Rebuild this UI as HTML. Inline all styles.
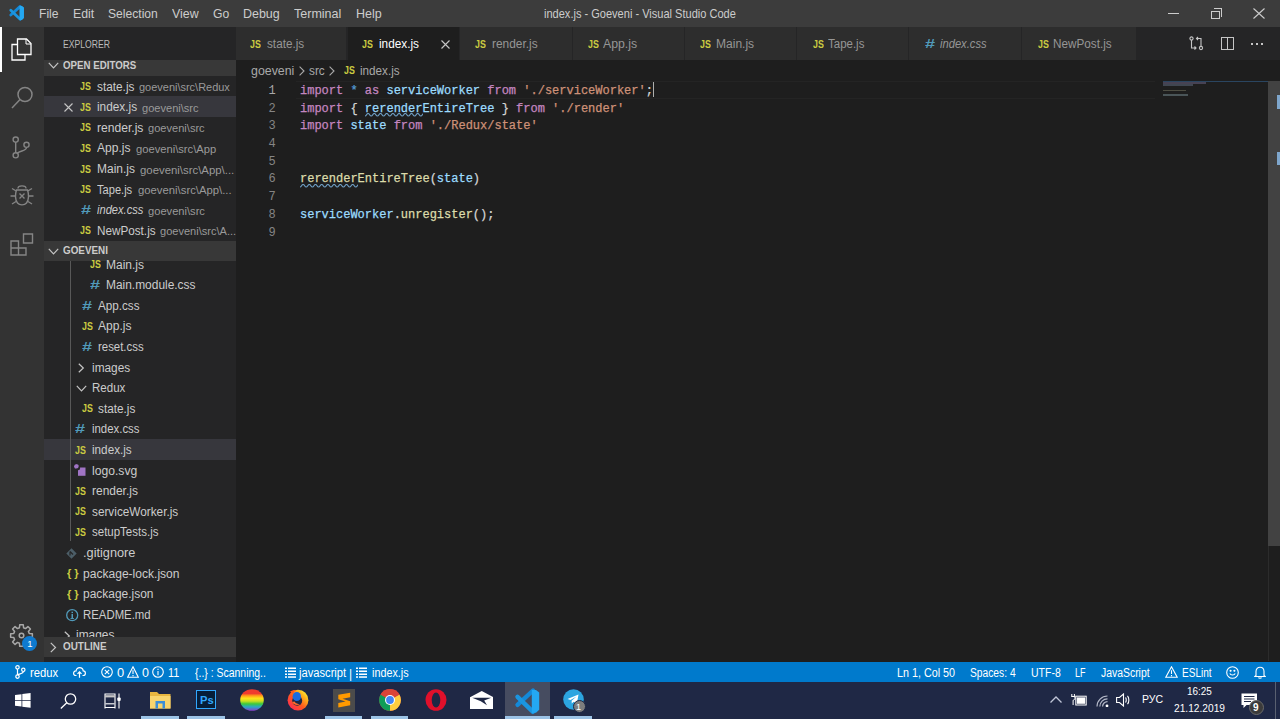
<!DOCTYPE html><html><head><meta charset="utf-8"><style>*{margin:0;padding:0;box-sizing:border-box}
html,body{width:1280px;height:719px;overflow:hidden;background:#1e1e1e;font-family:"Liberation Sans",sans-serif}
.a{position:absolute;white-space:nowrap}
.t{transform-origin:0 0;display:block}
</style></head><body>
<div class="a" style="left:0px;top:0px;width:1280px;height:27px;background:#3c3c3c;"></div>
<div class="a" style="left:0px;top:27px;width:44px;height:634.5px;background:#333333;"></div>
<div class="a" style="left:44px;top:27px;width:192px;height:634.5px;background:#252526;"></div>
<div class="a" style="left:236px;top:27px;width:1044px;height:33px;background:#252526;"></div>
<div class="a" style="left:0px;top:661.8px;width:1280px;height:20.2px;background:#007acc;"></div>
<div class="a" style="left:0px;top:682px;width:1280px;height:37px;background:#1f2845;"></div>
<svg class="a" style="left:4.7px;top:3px" width="20.7" height="19.5" viewBox="0 0 34 32"><path d="M25 5.5 L9.5 19.8" stroke="#1489d8" stroke-width="4.6" stroke-linecap="round"/><path d="M9.5 11.8 L25 26.8" stroke="#1b95e0" stroke-width="4.6" stroke-linecap="round"/><path d="M23.8 5 L28 4.9 L31.2 7.5 V24.8 L28 27.8 L23.8 28 Z" fill="#24a8f2"/></svg>
<div class="a" style="left:1168px;top:13px;width:11px;height:1px;background:#cccccc;"></div>
<div class="a" style="left:1211px;top:10.5px;width:8.5px;height:8.5px;border:1px solid #ccc"></div>
<div class="a" style="left:1213.5px;top:8px;width:8.5px;height:8.5px;border-top:1px solid #ccc;border-right:1px solid #ccc"></div>
<svg class="a" style="left:1253px;top:8px" width="12" height="11" viewBox="0 0 12 11"><path d="M0.5 0.5 L11.5 10.5 M11.5 0.5 L0.5 10.5" stroke="#ccc" stroke-width="1.1"/></svg>
<div class="a" style="left:0px;top:27px;width:2px;height:44.6px;background:#ffffff;"></div>
<svg class="a" style="left:10px;top:37px" width="24" height="25" viewBox="0 0 24 25" fill="none" stroke="#fff" stroke-width="1.3">
<path d="M7.5 7.5 H2 V23 H15 V17.5"/><path d="M7.5 2 H16.5 L21 6.5 V17.5 H7.5 Z"/><path d="M16 2 V7 H21" stroke-width="1"/></svg>
<svg class="a" style="left:9px;top:82px" width="26" height="28" viewBox="0 0 26 28" fill="none" stroke="#858585" stroke-width="1.5">
<circle cx="16" cy="12.5" r="7"/><path d="M11 17.5 L3 26"/></svg>
<svg class="a" style="left:10px;top:133px" width="24" height="26" viewBox="0 0 24 26" fill="none" stroke="#858585" stroke-width="1.4">
<circle cx="5.7" cy="6.6" r="2.6"/><circle cx="16.5" cy="11.8" r="2.6"/><circle cx="5.7" cy="22.3" r="2.6"/>
<path d="M5.7 9.2 V19.7 M16.5 14.4 C16.5 18 10 17.5 7.2 20.3"/></svg>
<svg class="a" style="left:8.5px;top:181px" width="26" height="28" viewBox="0 0 26 28" fill="none" stroke="#858585" stroke-width="1.4">
<path d="M9 7.5 C9 4 17 4 17 7.5"/><path d="M7.5 9 C6 13 6 19 8.5 22 C10.5 24.5 15.5 24.5 17.5 22 C20 19 20 13 18.5 9 Z"/>
<path d="M10.5 12.5 L15.5 17.5 M15.5 12.5 L10.5 17.5"/>
<path d="M1.5 15 H6 M20 15 H24.5 M3 7.5 L7.2 10 M23 7.5 L18.8 10 M3 23 L7 20.5 M23 23 L19 20.5"/></svg>
<svg class="a" style="left:9px;top:231px" width="26" height="28" viewBox="0 0 26 28" fill="none" stroke="#858585" stroke-width="1.4">
<path d="M2 10 H9.5 V24 H2 Z M2 17 H17 V24 H9.5 M14.5 3 H23.5 V12 H14.5 Z"/></svg>
<svg class="a" style="left:9px;top:623px" width="25" height="25" viewBox="0 0 25 25" fill="none" stroke="#a8a8a8" stroke-width="1.5" stroke-linejoin="round"><path d="M20.23 10.44 L23.36 10.75 L23.36 14.25 L20.23 14.56 L19.42 16.51 L21.42 18.94 L18.94 21.42 L16.51 19.42 L14.56 20.23 L14.25 23.36 L10.75 23.36 L10.44 20.23 L8.49 19.42 L6.06 21.42 L3.58 18.94 L5.58 16.51 L4.77 14.56 L1.64 14.25 L1.64 10.75 L4.77 10.44 L5.58 8.49 L3.58 6.06 L6.06 3.58 L8.49 5.58 L10.44 4.77 L10.75 1.64 L14.25 1.64 L14.56 4.77 L16.51 5.58 L18.94 3.58 L21.42 6.06 L19.42 8.49 Z"/><circle cx="12.5" cy="12.5" r="2.3"/></svg>
<div class="a" style="left:22px;top:635.5px;width:15px;height:15px;border-radius:8px;background:#0e7ad0"></div>
<div class="a" style="left:44px;top:59.7px;width:192px;height:16px;background:#383838;"></div>
<svg class="a" style="left:47.5px;top:62px" width="11" height="7" viewBox="0 0 11 7"><path d="M0.8 0.8 L5.5 5.8 L10.2 0.8" fill="none" stroke="#c5c5c5" stroke-width="1.2"/></svg>
<div class="a" style="left:44px;top:96.4px;width:192px;height:20.4px;background:#37373d;"></div>
<svg class="a" style="left:64px;top:103px" width="9" height="9" viewBox="0 0 9 9"><path d="M0.5 0.5 L8.5 8.5 M8.5 0.5 L0.5 8.5" stroke="#c5c5c5" stroke-width="1.1"/></svg>
<div class="a" style="left:44px;top:240.5px;width:192px;height:20.2px;background:#383838;"></div>
<svg class="a" style="left:47.5px;top:247.5px" width="11" height="7" viewBox="0 0 11 7"><path d="M0.8 0.8 L5.5 5.8 L10.2 0.8" fill="none" stroke="#c5c5c5" stroke-width="1.2"/></svg>
<div class="a" style="left:44px;top:438.90000000000003px;width:192px;height:21px;background:#37373d;"></div>
<div class="a" style="left:70.2px;top:260.6px;width:1px;height:280px;background:#585858;"></div>
<svg class="a" style="left:78.25px;top:362.7px" width="7" height="10" viewBox="0 0 7 10"><path d="M0.8 0.8 L5.3 5 L0.8 9.2" fill="none" stroke="#c5c5c5" stroke-width="1.2"/></svg>
<svg class="a" style="left:75.5px;top:384.8px" width="11" height="7" viewBox="0 0 11 7"><path d="M0.8 0.8 L5.5 5.8 L10.2 0.8" fill="none" stroke="#c5c5c5" stroke-width="1.2"/></svg>
<svg class="a" style="left:74.1px;top:464.2px" width="12" height="12" viewBox="0 0 12 12"><circle cx="2.5" cy="2.5" r="2.3" fill="#a074c4"/><path d="M4 3.5 H11.5 V11.8 H4 Z" fill="#a074c4"/><circle cx="4" cy="4" r="2.2" fill="#252526"/><circle cx="2.5" cy="2.5" r="2.1" fill="#a074c4"/></svg>
<svg class="a" style="left:66.25px;top:547.6px" width="11" height="11" viewBox="0 0 11 11"><path d="M5.5 0.3 L10.7 5.5 L5.5 10.7 L0.3 5.5 Z" fill="#4c5e68"/><path d="M4 3.5 L7 6.5 M4 3.5 V7.5" stroke="#252526" stroke-width="1.2"/></svg>
<svg class="a" style="left:65.6px;top:608.9000000000001px" width="13" height="13" viewBox="0 0 13 13"><circle cx="6.2" cy="6.2" r="5.5" fill="none" stroke="#519aba" stroke-width="1.3"/><rect x="5.5" y="5" width="1.5" height="4.6" fill="#519aba"/><rect x="5.5" y="2.7" width="1.5" height="1.4" fill="#519aba"/><rect x="4.5" y="9" width="3.5" height="0.9" fill="#519aba"/></svg>
<svg class="a" style="left:63.5px;top:630.5px" width="7" height="10" viewBox="0 0 7 10"><path d="M0.8 0.8 L5.3 5 L0.8 9.2" fill="none" stroke="#c5c5c5" stroke-width="1.2"/></svg>
<div class="a" style="left:235.6px;top:27px;width:110.9px;height:32.6px;background:#2d2d2d;"></div>
<div class="a" style="left:347.5px;top:27px;width:111.5px;height:32.6px;background:#1e1e1e;"></div>
<div class="a" style="left:460px;top:27px;width:111.5px;height:32.6px;background:#2d2d2d;"></div>
<div class="a" style="left:572.5px;top:27px;width:111.5px;height:32.6px;background:#2d2d2d;"></div>
<div class="a" style="left:685px;top:27px;width:111px;height:32.6px;background:#2d2d2d;"></div>
<div class="a" style="left:797px;top:27px;width:111px;height:32.6px;background:#2d2d2d;"></div>
<div class="a" style="left:909px;top:27px;width:112px;height:32.6px;background:#2d2d2d;"></div>
<div class="a" style="left:1022px;top:27px;width:114.40000000000009px;height:32.6px;background:#2d2d2d;"></div>
<svg class="a" style="left:441px;top:40px" width="9" height="9" viewBox="0 0 9 9"><path d="M0.5 0.5 L8.5 8.5 M8.5 0.5 L0.5 8.5" stroke="#c5c5c5" stroke-width="1.1"/></svg>
<svg class="a" style="left:1189px;top:36px" width="15" height="15" viewBox="0 0 15 15" fill="none" stroke="#c5c5c5" stroke-width="1.1">
<circle cx="2.5" cy="2.5" r="1.6"/><circle cx="12" cy="12" r="1.6"/><path d="M2.5 4.1 V12 H7 M5.5 10.5 L7 12 L5.5 13.5 M12 10.4 V2.5 H7.5 M9 1 L7.5 2.5 L9 4"/></svg>
<div class="a" style="left:1221px;top:37px;width:12.5px;height:12.5px;border:1.2px solid #c5c5c5"></div>
<div class="a" style="left:1226.6px;top:37px;width:1.2px;height:12.5px;background:#c5c5c5;"></div>
<div class="a" style="left:1251px;top:43.3px;width:2px;height:2px;background:#c5c5c5"></div>
<div class="a" style="left:1256px;top:43.3px;width:2px;height:2px;background:#c5c5c5"></div>
<div class="a" style="left:1261px;top:43.3px;width:2px;height:2px;background:#c5c5c5"></div>
<svg class="a" style="left:298.5px;top:65.5px" width="6" height="10" viewBox="0 0 6 10"><path d="M0.6 0.6 L5 5 L0.6 9.4" fill="none" stroke="#a9a9a9" stroke-width="1.1"/></svg>
<svg class="a" style="left:328.6px;top:65.5px" width="6" height="10" viewBox="0 0 6 10"><path d="M0.6 0.6 L5 5 L0.6 9.4" fill="none" stroke="#a9a9a9" stroke-width="1.1"/></svg>
<div class="a" style="left:296px;top:80.6px;width:859px;height:1px;background:#242424;"></div>
<div class="a" style="left:296px;top:97.6px;width:859px;height:1px;background:#242424;"></div>
<div class="a" style="left:652.5px;top:82px;width:1.3px;height:15px;background:#aeafad;"></div>
<svg class="a" style="left:364.8px;top:113.3px" width="58" height="4" viewBox="0 0 58 4"><path d="M0 3 C1.50 3 1.60 0.5 3.10 0.5 C4.60 0.5 4.70 3 6.20 3 C7.70 3 7.80 0.5 9.30 0.5 C10.80 0.5 10.90 3 12.40 3 C13.90 3 14.00 0.5 15.50 0.5 C17.00 0.5 17.10 3 18.60 3 C20.10 3 20.20 0.5 21.70 0.5 C23.20 0.5 23.30 3 24.80 3 C26.30 3 26.40 0.5 27.90 0.5 C29.40 0.5 29.50 3 31.00 3 C32.50 3 32.60 0.5 34.10 0.5 C35.60 0.5 35.70 3 37.20 3 C38.70 3 38.80 0.5 40.30 0.5 C41.80 0.5 41.90 3 43.40 3 C44.90 3 45.00 0.5 46.50 0.5 C48.00 0.5 48.10 3 49.60 3 C51.10 3 51.20 0.5 52.70 0.5 C54.20 0.5 54.30 3 55.80 3 C57.30 3 57.40 0.5 58.90 0.5 C60.40 0.5 60.50 3 62.00 3" fill="none" stroke="#6f9fc4" stroke-width="1.2"/></svg>
<svg class="a" style="left:300px;top:183.5px" width="58" height="4" viewBox="0 0 58 4"><path d="M0 3 C1.50 3 1.60 0.5 3.10 0.5 C4.60 0.5 4.70 3 6.20 3 C7.70 3 7.80 0.5 9.30 0.5 C10.80 0.5 10.90 3 12.40 3 C13.90 3 14.00 0.5 15.50 0.5 C17.00 0.5 17.10 3 18.60 3 C20.10 3 20.20 0.5 21.70 0.5 C23.20 0.5 23.30 3 24.80 3 C26.30 3 26.40 0.5 27.90 0.5 C29.40 0.5 29.50 3 31.00 3 C32.50 3 32.60 0.5 34.10 0.5 C35.60 0.5 35.70 3 37.20 3 C38.70 3 38.80 0.5 40.30 0.5 C41.80 0.5 41.90 3 43.40 3 C44.90 3 45.00 0.5 46.50 0.5 C48.00 0.5 48.10 3 49.60 3 C51.10 3 51.20 0.5 52.70 0.5 C54.20 0.5 54.30 3 55.80 3 C57.30 3 57.40 0.5 58.90 0.5 C60.40 0.5 60.50 3 62.00 3" fill="none" stroke="#6f9fc4" stroke-width="1.2"/></svg>
<div class="a" style="left:1163px;top:81px;width:105px;height:1px;background:#2a4560;"></div>
<div class="a" style="left:1163px;top:81.5px;width:43px;height:2px;background:#6a6080;opacity:.55"></div>
<div class="a" style="left:1163px;top:84px;width:30px;height:2px;background:#6a7890;opacity:.45"></div>
<div class="a" style="left:1163px;top:89.8px;width:23px;height:1.5px;background:#8a8a70;opacity:.45"></div>
<div class="a" style="left:1163px;top:94px;width:25px;height:1.5px;background:#8098a0;opacity:.45"></div>
<div class="a" style="left:1268px;top:80.6px;width:12px;height:465.6px;background:#424242;"></div>
<div class="a" style="left:1268px;top:546.2px;width:1px;height:115.3px;background:#2c2c2c;"></div>
<div class="a" style="left:1276.8px;top:94.5px;width:3.2px;height:14px;background:#7ea6cc;"></div>
<div class="a" style="left:1276.8px;top:152.2px;width:3.2px;height:13.2px;background:#7ea6cc;"></div>
<svg class="a" style="left:14.5px;top:665px" width="11" height="14" viewBox="0 0 11 14" fill="none" stroke="#fff" stroke-width="1.2">
<circle cx="2.5" cy="2.3" r="1.7"/><circle cx="8.3" cy="4.8" r="1.7"/><circle cx="2.5" cy="11.6" r="1.7"/><path d="M2.5 4 V9.9 M8.3 6.5 C8.3 9 3.8 8.5 2.8 9.9"/></svg>
<svg class="a" style="left:72.5px;top:667px" width="13" height="11" viewBox="0 0 13 11" fill="none" stroke="#fff" stroke-width="1.2">
<path d="M3.5 8.5 H2.8 C1.3 8.5 0.6 7.5 0.6 6.2 C0.6 4.8 1.8 3.8 3 4 C3.4 2 5 0.7 6.7 0.7 C8.6 0.7 10 2.1 10.2 3.9 C11.5 3.9 12.4 5 12.4 6.2 C12.4 7.5 11.5 8.5 10.2 8.5 H9.5"/><path d="M6.5 10.8 V4.8 M4.5 6.8 L6.5 4.8 L8.5 6.8"/></svg>
<svg class="a" style="left:100.5px;top:666px" width="12" height="12" viewBox="0 0 12 12" fill="none" stroke="#fff" stroke-width="1.1"><circle cx="6" cy="6" r="5.3"/><path d="M3.8 3.8 L8.2 8.2 M8.2 3.8 L3.8 8.2"/></svg>
<svg class="a" style="left:126.5px;top:665.5px" width="12" height="12" viewBox="0 0 12 12" fill="none" stroke="#fff" stroke-width="1.1"><path d="M6 0.8 L11.3 11.2 H0.7 Z M6 4.2 V8 M6 9 V10.2"/></svg>
<svg class="a" style="left:152px;top:666px" width="12" height="12" viewBox="0 0 12 12" fill="none" stroke="#fff" stroke-width="1.1"><circle cx="6" cy="6" r="5.3"/><path d="M6 5 V9.2 M6 2.8 V4"/></svg>
<svg class="a" style="left:285px;top:666.5px" width="11" height="11" viewBox="0 0 11 11" fill="#fff"><rect x="0" y="0.5" width="2" height="1.5"/><rect x="3" y="0.5" width="8" height="1.5"/><rect x="0" y="3.5" width="2" height="1.5"/><rect x="3" y="3.5" width="8" height="1.5"/><rect x="0" y="6.5" width="2" height="1.5"/><rect x="3" y="6.5" width="8" height="1.5"/><rect x="0" y="9.3" width="2" height="1.5"/><rect x="3" y="9.3" width="8" height="1.5"/></svg>
<svg class="a" style="left:356px;top:666.5px" width="11" height="11" viewBox="0 0 11 11" fill="#fff"><rect x="0" y="0.5" width="2" height="1.5"/><rect x="3" y="0.5" width="8" height="1.5"/><rect x="0" y="3.5" width="2" height="1.5"/><rect x="3" y="3.5" width="8" height="1.5"/><rect x="0" y="6.5" width="2" height="1.5"/><rect x="3" y="6.5" width="8" height="1.5"/><rect x="0" y="9.3" width="2" height="1.5"/><rect x="3" y="9.3" width="8" height="1.5"/></svg>
<svg class="a" style="left:1164.5px;top:665.5px" width="13" height="12" viewBox="0 0 13 12" fill="none" stroke="#fff" stroke-width="1.1"><path d="M6.5 0.8 L12.2 11.2 H0.8 Z M6.5 4.2 V8 M6.5 9 V10.2"/></svg>
<svg class="a" style="left:1225.5px;top:665.5px" width="13" height="13" viewBox="0 0 13 13" fill="none" stroke="#fff" stroke-width="1.1"><circle cx="6.5" cy="6.5" r="5.8"/><path d="M3.8 7.5 C4.8 9.5 8.2 9.5 9.2 7.5"/><circle cx="4.6" cy="4.8" r="0.5" fill="#fff"/><circle cx="8.4" cy="4.8" r="0.5" fill="#fff"/></svg>
<svg class="a" style="left:1254px;top:665.5px" width="12" height="13" viewBox="0 0 12 13" fill="none" stroke="#fff" stroke-width="1.1"><path d="M2 9.5 V5.5 C2 3 3.8 1.3 6 1.3 C8.2 1.3 10 3 10 5.5 V9.5 L11.2 10.5 H0.8 Z M4.5 11.5 C4.8 12.5 7.2 12.5 7.5 11.5"/></svg>
<svg class="a" style="left:14.5px;top:693px" width="16" height="15" viewBox="0 0 16 15" fill="#ffffff"><path d="M0 2.1 L6.5 1.2 V7 H0 Z M7.3 1.1 L15.6 0 V7 H7.3 Z M0 7.8 H6.5 V13.6 L0 12.8 Z M7.3 7.8 H15.6 V14.8 L7.3 13.7 Z"/></svg>
<svg class="a" style="left:59.5px;top:692.5px" width="17" height="16" viewBox="0 0 17 16" fill="none" stroke="#ffffff" stroke-width="1.3"><circle cx="10.5" cy="6" r="5.2"/><path d="M6.8 9.7 L0.8 15.5"/></svg>
<svg class="a" style="left:104px;top:692.5px" width="17" height="16" viewBox="0 0 17 16" fill="none" stroke="#ffffff" stroke-width="1.1"><path d="M1 0.5 V15.5 M11 0.5 V15.5 M1 1 H11 M1 14.5 H11"/><rect x="1" y="2.2" width="10" height="2.2" fill="#c8c8c8" stroke="none"/><path d="M1.5 10.8 H10.5"/><path d="M15 0.5 V15.5"/><rect x="13.3" y="4.5" width="3.4" height="3.6" rx="1" fill="#ffffff" stroke="none"/></svg>
<div class="a" style="left:140.6px;top:716.3px;width:38.70000000000002px;height:2.7px;background:#9cc3e6;"></div>
<div class="a" style="left:186.8px;top:716.3px;width:38.19999999999999px;height:2.7px;background:#9cc3e6;"></div>
<div class="a" style="left:324.7px;top:716.3px;width:37.69999999999999px;height:2.7px;background:#9cc3e6;"></div>
<div class="a" style="left:371px;top:716.3px;width:37px;height:2.7px;background:#9cc3e6;"></div>
<div class="a" style="left:505px;top:716.3px;width:44.5px;height:2.7px;background:#9cc3e6;"></div>
<div class="a" style="left:554.4px;top:716.3px;width:37.60000000000002px;height:2.7px;background:#9cc3e6;"></div>
<div class="a" style="left:505px;top:682px;width:44.5px;height:37px;background:#464c60;"></div>
<div class="a" style="left:505px;top:716.3px;width:44.5px;height:2.7px;background:#9cc3e6;"></div>
<svg class="a" style="left:150px;top:691px" width="21" height="18" viewBox="0 0 21 18"><path d="M0 1 H7 L9 3 H20.5 V17.5 H0 Z" fill="#e8b640"/><path d="M0 5 H20.5 V17.5 H0 Z" fill="#f9d56e"/><path d="M5.5 10 H15 V17.5 H12.5 V12.5 H8 V17.5 H5.5 Z" fill="#3d8fd8"/></svg>
<div class="a" style="left:196px;top:689.5px;width:20px;height:19px;background:#061e3a;border:1.5px solid #31a8ff"></div>
<svg class="a" style="left:240px;top:689px" width="24" height="22" viewBox="0 0 24 22"><defs><linearGradient id="rb" x1="0" y1="0" x2="0" y2="1"><stop offset="0" stop-color="#f03a2e"/><stop offset=".2" stop-color="#f03a2e"/><stop offset=".3" stop-color="#ff9a1a"/><stop offset=".42" stop-color="#ffe21a"/><stop offset=".55" stop-color="#c8e020"/><stop offset=".68" stop-color="#3cc83c"/><stop offset=".82" stop-color="#2aa8c8"/><stop offset="1" stop-color="#8a3cc8"/></linearGradient></defs><ellipse cx="12" cy="11" rx="11.8" ry="10.8" fill="url(#rb)"/></svg>
<svg class="a" style="left:287px;top:689px" width="22" height="22" viewBox="0 0 22 22"><defs><linearGradient id="ffg" x1="0.1" y1="0.9" x2="0.9" y2="0.1"><stop offset="0" stop-color="#ff2a55"/><stop offset=".45" stop-color="#ff5a1e"/><stop offset=".8" stop-color="#ffb81c"/><stop offset="1" stop-color="#fff13a"/></linearGradient></defs><circle cx="11" cy="11.2" r="10.4" fill="url(#ffg)"/><circle cx="10.2" cy="11.8" r="5" fill="#1f2845"/><ellipse cx="9.8" cy="7.5" rx="4.2" ry="4.6" fill="#1a6be0"/><path d="M5 13 C6.5 16 10.5 16.8 13 15 C11 15 8.5 14.5 7.5 12.5 Z" fill="#ff6a2a"/><path d="M3 2.5 C4.5 1.5 7 0.8 9 1 C7.5 2 6.5 3.5 6.2 5 Z" fill="#ff5a1e"/></svg>
<div class="a" style="left:332.5px;top:689px;width:22.2px;height:22.5px;background:#4b4b4b"></div>
<svg class="a" style="left:332.5px;top:689px" width="22.2" height="22.5" viewBox="0 0 22.2 22.5"><path d="M5.3 5.8 L17.2 3.8 V8.3 L9.5 9.8 L17.2 12.2 V16.3 L5.3 18.5 V14 L12.6 12.6 L5.3 10.3 Z" fill="#ff9a00"/></svg>
<svg class="a" style="left:378.8px;top:688.7px" width="22" height="22" viewBox="0 0 22 22"><circle cx="11" cy="11" r="10.8" fill="#db4437"/><path d="M11 11 L1.6 5.6 A10.8 10.8 0 0 0 11 21.8 Z" fill="#0f9d58"/><path d="M11 11 L11 21.8 A10.8 10.8 0 0 0 20.4 5.6 Z" fill="#ffcd40"/><path d="M11 11 L20.4 5.6 A10.8 10.8 0 0 0 1.6 5.6 Z" fill="#db4437"/><circle cx="11" cy="11" r="5" fill="#fff"/><circle cx="11" cy="11" r="3.9" fill="#4285f4"/></svg>
<svg class="a" style="left:424.5px;top:688.7px" width="22" height="22" viewBox="0 0 22 22"><ellipse cx="11" cy="11" rx="10.5" ry="10.8" fill="#e0102b"/><ellipse cx="11" cy="11" rx="4.3" ry="7.6" fill="#1f2845"/></svg>
<svg class="a" style="left:469.6px;top:690.5px" width="23.5" height="18.5" viewBox="0 0 23.5 18.5"><path d="M0 6.2 L11.75 0 L23.5 6.2 V18.3 H0 Z" fill="#ffffff"/><path d="M2.2 6.8 H21.3 L14.2 9.6 L17 14.3 L10.8 10.2 Z" fill="#1f2845"/></svg>
<svg class="a" style="left:508px;top:684.8px" width="34" height="32" viewBox="0 0 34 32"><path d="M25 5.5 L9.5 19.8" stroke="#1489d8" stroke-width="4.4" stroke-linecap="round"/><path d="M9.5 11.8 L25 26.8" stroke="#1b95e0" stroke-width="4.4" stroke-linecap="round"/><path d="M23.8 5 L28 4.9 L31.2 7.5 V24.8 L28 27.8 L23.8 28 Z" fill="#24a8f2"/></svg>
<svg class="a" style="left:562.6px;top:689px" width="21" height="21" viewBox="0 0 21 21"><circle cx="10.5" cy="10.5" r="10.3" fill="#2ca5e0"/><path d="M4.5 10 L15.5 5.5 L13.8 15 L10.5 12.8 L8.8 14.5 L8.6 11.8 L13.5 7.5 L7.5 11 Z" fill="#ffffff"/></svg>
<div class="a" style="left:572.5px;top:700px;width:13px;height:13px;border-radius:7px;background:#7d7d7d;border:1px solid #1f2845"></div>
<svg class="a" style="left:1050px;top:696px" width="12" height="7" viewBox="0 0 12 7" fill="none" stroke="#c0c6d8" stroke-width="1.3"><path d="M0.5 6.5 L6 1 L11.5 6.5"/></svg>
<svg class="a" style="left:1070.5px;top:694px" width="16" height="12" viewBox="0 0 16 12"><path d="M0.8 0 V2.5 M3.4 0 V2.5 M0.3 2.5 H3.9 V4.5 C3.9 5.8 2.1 6.2 2.1 6.2 V11" fill="none" stroke="#fff" stroke-width="1"/><rect x="4.8" y="2.2" width="10.4" height="8.8" fill="none" stroke="#fff" stroke-width="1"/><rect x="5.8" y="3.4" width="8.4" height="6.4" fill="#fff"/></svg>
<svg class="a" style="left:1095.5px;top:694px" width="13" height="13" viewBox="0 0 13 13" fill="none" stroke="#b4b9c8" stroke-width="1.2"><path d="M1 12.5 A10.5 10.5 0 0 1 11.5 2 M3.8 12.5 A7.7 7.7 0 0 1 11.5 4.8 M6.6 12.5 A4.9 4.9 0 0 1 11.5 7.6"/><circle cx="11" cy="11.8" r="1.4" fill="#fff" stroke="none"/></svg>
<svg class="a" style="left:1116px;top:692.5px" width="15" height="14" viewBox="0 0 15 14" fill="none" stroke="#fff" stroke-width="1.1"><path d="M0.6 4.5 H3.5 L7.5 1 V13 L3.5 9.5 H0.6 Z M9.5 4.5 C10.5 5.5 10.5 8.5 9.5 9.5 M11.5 2.8 C13.3 4.8 13.3 9.2 11.5 11.2" /></svg>
<svg class="a" style="left:1241px;top:692.5px" width="17" height="16" viewBox="0 0 17 16"><path d="M0.5 0.5 H16 V12 H5.5 L2.5 15 V12 H0.5 Z" fill="#ffffff"/><path d="M3 3.5 H13.5 M3 6 H13.5 M3 8.5 H10" stroke="#1f2845" stroke-width="1.1"/></svg>
<div class="a" style="left:1248.5px;top:699.5px;width:15.5px;height:15.5px;border-radius:8px;background:#3b3b3b;border:1px solid #6a6a6a"></div>
<div class="a" style="left:1275.4px;top:682px;width:1px;height:37px;background:#596070;"></div>
<span id="t0" class="a t" style="left:39.00px;top:7.67px;font-size:12.2px;line-height:12.2px;color:#cccccc;font-family:'Liberation Sans',sans-serif;transform:scaleX(0.9943)">File</span>
<span id="t1" class="a t" style="left:72.50px;top:7.67px;font-size:12.2px;line-height:12.2px;color:#cccccc;font-family:'Liberation Sans',sans-serif;transform:scaleX(1.0107)">Edit</span>
<span id="t2" class="a t" style="left:107.80px;top:7.67px;font-size:12.2px;line-height:12.2px;color:#cccccc;font-family:'Liberation Sans',sans-serif;transform:scaleX(0.9938)">Selection</span>
<span id="t3" class="a t" style="left:171.90px;top:7.67px;font-size:12.2px;line-height:12.2px;color:#cccccc;font-family:'Liberation Sans',sans-serif;transform:scaleX(1.0168)">View</span>
<span id="t4" class="a t" style="left:212.50px;top:7.67px;font-size:12.2px;line-height:12.2px;color:#cccccc;font-family:'Liberation Sans',sans-serif;transform:scaleX(0.9978)">Go</span>
<span id="t5" class="a t" style="left:243.00px;top:7.67px;font-size:12.2px;line-height:12.2px;color:#cccccc;font-family:'Liberation Sans',sans-serif;transform:scaleX(1.0230)">Debug</span>
<span id="t6" class="a t" style="left:294.00px;top:7.67px;font-size:12.2px;line-height:12.2px;color:#cccccc;font-family:'Liberation Sans',sans-serif;transform:scaleX(1.0280)">Terminal</span>
<span id="t7" class="a t" style="left:355.60px;top:7.67px;font-size:12.2px;line-height:12.2px;color:#cccccc;font-family:'Liberation Sans',sans-serif;transform:scaleX(1.0269)">Help</span>
<span id="t8" class="a t" style="left:544.40px;top:7.57px;font-size:12.2px;line-height:12.2px;color:#cccccc;font-family:'Liberation Sans',sans-serif;transform:scaleX(0.9057)">index.js - Goeveni - Visual Studio Code</span>
<span id="t9" class="a t" style="left:27.20px;top:638.96px;font-size:9.5px;line-height:9.5px;color:#ffffff;font-family:'Liberation Sans',sans-serif">1</span>
<span id="t10" class="a t" style="left:63.00px;top:38.69px;font-size:11px;line-height:11px;color:#bbbbbb;font-family:'Liberation Sans',sans-serif;transform:scaleX(0.7847)">EXPLORER</span>
<span id="t11" class="a t" style="left:63.10px;top:60.63px;font-size:10px;line-height:10px;color:#cccccc;font-family:'Liberation Sans',sans-serif;font-weight:bold;transform:scaleX(0.9707)">OPEN EDITORS</span>
<span id="t12" class="a t" style="left:80.20px;top:81.21px;font-size:10.5px;line-height:10.5px;color:#cbcb41;font-family:'Liberation Sans',sans-serif;font-weight:bold;transform:scaleX(0.8433)">JS</span>
<span id="t13" class="a t" style="left:96.50px;top:80.64px;font-size:12px;line-height:12px;color:#cccccc;font-family:'Liberation Sans',sans-serif;transform:scaleX(0.9840)">state.js</span>
<span id="t14" class="a t" style="left:138.80px;top:82.19px;font-size:11px;line-height:11px;color:#9a9a9a;font-family:'Liberation Sans',sans-serif;transform:scaleX(0.9972)">goeveni\src\Redux</span>
<span id="t15" class="a t" style="left:80.20px;top:101.81px;font-size:10.5px;line-height:10.5px;color:#cbcb41;font-family:'Liberation Sans',sans-serif;font-weight:bold;transform:scaleX(0.8433)">JS</span>
<span id="t16" class="a t" style="left:96.90px;top:101.24px;font-size:12px;line-height:12px;color:#cccccc;font-family:'Liberation Sans',sans-serif;transform:scaleX(0.9845)">index.js</span>
<span id="t17" class="a t" style="left:141.80px;top:102.79px;font-size:11px;line-height:11px;color:#9a9a9a;font-family:'Liberation Sans',sans-serif;transform:scaleX(1.0053)">goeveni\src</span>
<span id="t18" class="a t" style="left:80.20px;top:122.41px;font-size:10.5px;line-height:10.5px;color:#cbcb41;font-family:'Liberation Sans',sans-serif;font-weight:bold;transform:scaleX(0.8433)">JS</span>
<span id="t19" class="a t" style="left:96.50px;top:121.84px;font-size:12px;line-height:12px;color:#cccccc;font-family:'Liberation Sans',sans-serif;transform:scaleX(1.0086)">render.js</span>
<span id="t20" class="a t" style="left:148.20px;top:123.39px;font-size:11px;line-height:11px;color:#9a9a9a;font-family:'Liberation Sans',sans-serif;transform:scaleX(1.0071)">goeveni\src</span>
<span id="t21" class="a t" style="left:80.20px;top:143.01px;font-size:10.5px;line-height:10.5px;color:#cbcb41;font-family:'Liberation Sans',sans-serif;font-weight:bold;transform:scaleX(0.8433)">JS</span>
<span id="t22" class="a t" style="left:96.50px;top:142.44px;font-size:12px;line-height:12px;color:#cccccc;font-family:'Liberation Sans',sans-serif;transform:scaleX(1.0019)">App.js</span>
<span id="t23" class="a t" style="left:135.50px;top:143.99px;font-size:11px;line-height:11px;color:#9a9a9a;font-family:'Liberation Sans',sans-serif;transform:scaleX(1.0162)">goeveni\src\App</span>
<span id="t24" class="a t" style="left:80.20px;top:163.61px;font-size:10.5px;line-height:10.5px;color:#cbcb41;font-family:'Liberation Sans',sans-serif;font-weight:bold;transform:scaleX(0.8433)">JS</span>
<span id="t25" class="a t" style="left:96.80px;top:163.04px;font-size:12px;line-height:12px;color:#cccccc;font-family:'Liberation Sans',sans-serif;transform:scaleX(0.9974)">Main.js</span>
<span id="t26" class="a t" style="left:139.70px;top:164.59px;font-size:11px;line-height:11px;color:#9a9a9a;font-family:'Liberation Sans',sans-serif;transform:scaleX(1.0348)">goeveni\src\App\...</span>
<span id="t27" class="a t" style="left:80.20px;top:184.21px;font-size:10.5px;line-height:10.5px;color:#cbcb41;font-family:'Liberation Sans',sans-serif;font-weight:bold;transform:scaleX(0.8433)">JS</span>
<span id="t28" class="a t" style="left:97.20px;top:183.64px;font-size:12px;line-height:12px;color:#cccccc;font-family:'Liberation Sans',sans-serif;transform:scaleX(0.9247)">Tape.js</span>
<span id="t29" class="a t" style="left:137.75px;top:185.19px;font-size:11px;line-height:11px;color:#9a9a9a;font-family:'Liberation Sans',sans-serif;transform:scaleX(1.0276)">goeveni\src\App\...</span>
<span id="t30" class="a t" style="left:80.50px;top:204.24px;font-size:12px;line-height:12px;color:#519aba;font-family:'Liberation Sans',sans-serif;font-weight:bold;transform:scaleX(1.5082)">#</span>
<span id="t31" class="a t" style="left:96.50px;top:204.24px;font-size:12px;line-height:12px;color:#cccccc;font-family:'Liberation Sans',sans-serif;font-style:italic;transform:scaleX(0.9268)">index.css</span>
<span id="t32" class="a t" style="left:147.50px;top:205.79px;font-size:11px;line-height:11px;color:#9a9a9a;font-family:'Liberation Sans',sans-serif;transform:scaleX(1.0116)">goeveni\src</span>
<span id="t33" class="a t" style="left:80.20px;top:225.41px;font-size:10.5px;line-height:10.5px;color:#cbcb41;font-family:'Liberation Sans',sans-serif;font-weight:bold;transform:scaleX(0.8433)">JS</span>
<span id="t34" class="a t" style="left:96.80px;top:224.84px;font-size:12px;line-height:12px;color:#cccccc;font-family:'Liberation Sans',sans-serif;transform:scaleX(0.9762)">NewPost.js</span>
<span id="t35" class="a t" style="left:159.80px;top:226.39px;font-size:11px;line-height:11px;color:#9a9a9a;font-family:'Liberation Sans',sans-serif;transform:scaleX(1.0037)">goeveni\src\A...</span>
<span id="t36" class="a t" style="left:62.70px;top:245.84px;font-size:10px;line-height:10px;color:#cccccc;font-family:'Liberation Sans',sans-serif;font-weight:bold;transform:scaleX(0.9849)">GOEVENI</span>
<span id="t37" class="a t" style="left:90.10px;top:259.11px;font-size:10.5px;line-height:10.5px;color:#cbcb41;font-family:'Liberation Sans',sans-serif;font-weight:bold;transform:scaleX(0.8433)">JS</span>
<span id="t38" class="a t" style="left:106.30px;top:258.54px;font-size:12px;line-height:12px;color:#cccccc;font-family:'Liberation Sans',sans-serif;transform:scaleX(1.0001)">Main.js</span>
<span id="t39" class="a t" style="left:90.00px;top:279.14px;font-size:12px;line-height:12px;color:#519aba;font-family:'Liberation Sans',sans-serif;font-weight:bold;transform:scaleX(1.5082)">#</span>
<span id="t40" class="a t" style="left:106.30px;top:279.14px;font-size:12px;line-height:12px;color:#cccccc;font-family:'Liberation Sans',sans-serif;transform:scaleX(0.9941)">Main.module.css</span>
<span id="t41" class="a t" style="left:82.40px;top:299.74px;font-size:12px;line-height:12px;color:#519aba;font-family:'Liberation Sans',sans-serif;font-weight:bold;transform:scaleX(1.5082)">#</span>
<span id="t42" class="a t" style="left:98.40px;top:299.74px;font-size:12px;line-height:12px;color:#cccccc;font-family:'Liberation Sans',sans-serif;transform:scaleX(0.9722)">App.css</span>
<span id="t43" class="a t" style="left:82.10px;top:320.91px;font-size:10.5px;line-height:10.5px;color:#cbcb41;font-family:'Liberation Sans',sans-serif;font-weight:bold;transform:scaleX(0.8433)">JS</span>
<span id="t44" class="a t" style="left:98.40px;top:320.34px;font-size:12px;line-height:12px;color:#cccccc;font-family:'Liberation Sans',sans-serif;transform:scaleX(1.0019)">App.js</span>
<span id="t45" class="a t" style="left:82.40px;top:340.94px;font-size:12px;line-height:12px;color:#519aba;font-family:'Liberation Sans',sans-serif;font-weight:bold;transform:scaleX(1.5082)">#</span>
<span id="t46" class="a t" style="left:98.40px;top:340.94px;font-size:12px;line-height:12px;color:#cccccc;font-family:'Liberation Sans',sans-serif;transform:scaleX(0.9493)">reset.css</span>
<span id="t47" class="a t" style="left:91.50px;top:361.54px;font-size:12px;line-height:12px;color:#cccccc;font-family:'Liberation Sans',sans-serif;transform:scaleX(0.9877)">images</span>
<span id="t48" class="a t" style="left:91.50px;top:382.14px;font-size:12px;line-height:12px;color:#cccccc;font-family:'Liberation Sans',sans-serif;transform:scaleX(0.9597)">Redux</span>
<span id="t49" class="a t" style="left:82.10px;top:403.31px;font-size:10.5px;line-height:10.5px;color:#cbcb41;font-family:'Liberation Sans',sans-serif;font-weight:bold;transform:scaleX(0.8433)">JS</span>
<span id="t50" class="a t" style="left:98.40px;top:402.74px;font-size:12px;line-height:12px;color:#cccccc;font-family:'Liberation Sans',sans-serif;transform:scaleX(0.9813)">state.js</span>
<span id="t51" class="a t" style="left:74.80px;top:423.34px;font-size:12px;line-height:12px;color:#519aba;font-family:'Liberation Sans',sans-serif;font-weight:bold;transform:scaleX(1.5082)">#</span>
<span id="t52" class="a t" style="left:91.50px;top:423.34px;font-size:12px;line-height:12px;color:#cccccc;font-family:'Liberation Sans',sans-serif;transform:scaleX(0.9491)">index.css</span>
<span id="t53" class="a t" style="left:74.80px;top:444.51px;font-size:10.5px;line-height:10.5px;color:#cbcb41;font-family:'Liberation Sans',sans-serif;font-weight:bold;transform:scaleX(0.8433)">JS</span>
<span id="t54" class="a t" style="left:91.50px;top:443.94px;font-size:12px;line-height:12px;color:#cccccc;font-family:'Liberation Sans',sans-serif;transform:scaleX(0.9758)">index.js</span>
<span id="t55" class="a t" style="left:91.50px;top:464.54px;font-size:12px;line-height:12px;color:#cccccc;font-family:'Liberation Sans',sans-serif;transform:scaleX(1.0118)">logo.svg</span>
<span id="t56" class="a t" style="left:74.80px;top:485.71px;font-size:10.5px;line-height:10.5px;color:#cbcb41;font-family:'Liberation Sans',sans-serif;font-weight:bold;transform:scaleX(0.8433)">JS</span>
<span id="t57" class="a t" style="left:91.50px;top:485.14px;font-size:12px;line-height:12px;color:#cccccc;font-family:'Liberation Sans',sans-serif;transform:scaleX(0.9975)">render.js</span>
<span id="t58" class="a t" style="left:74.80px;top:506.31px;font-size:10.5px;line-height:10.5px;color:#cbcb41;font-family:'Liberation Sans',sans-serif;font-weight:bold;transform:scaleX(0.8433)">JS</span>
<span id="t59" class="a t" style="left:91.50px;top:505.74px;font-size:12px;line-height:12px;color:#cccccc;font-family:'Liberation Sans',sans-serif;transform:scaleX(0.9819)">serviceWorker.js</span>
<span id="t60" class="a t" style="left:74.80px;top:526.91px;font-size:10.5px;line-height:10.5px;color:#cbcb41;font-family:'Liberation Sans',sans-serif;font-weight:bold;transform:scaleX(0.8433)">JS</span>
<span id="t61" class="a t" style="left:91.50px;top:526.34px;font-size:12px;line-height:12px;color:#cccccc;font-family:'Liberation Sans',sans-serif;transform:scaleX(0.9577)">setupTests.js</span>
<span id="t62" class="a t" style="left:83.40px;top:546.94px;font-size:12px;line-height:12px;color:#cccccc;font-family:'Liberation Sans',sans-serif;transform:scaleX(1.0626)">.gitignore</span>
<span id="t63" class="a t" style="left:67.00px;top:568.39px;font-size:11px;line-height:11px;color:#cbcb41;font-family:'Liberation Sans',sans-serif;font-weight:bold;transform:scaleX(1.0032)">{ }</span>
<span id="t64" class="a t" style="left:83.40px;top:567.54px;font-size:12px;line-height:12px;color:#cccccc;font-family:'Liberation Sans',sans-serif;transform:scaleX(1.0048)">package-lock.json</span>
<span id="t65" class="a t" style="left:67.00px;top:588.99px;font-size:11px;line-height:11px;color:#cbcb41;font-family:'Liberation Sans',sans-serif;font-weight:bold;transform:scaleX(1.0032)">{ }</span>
<span id="t66" class="a t" style="left:83.40px;top:588.14px;font-size:12px;line-height:12px;color:#cccccc;font-family:'Liberation Sans',sans-serif;transform:scaleX(0.9972)">package.json</span>
<span id="t67" class="a t" style="left:83.40px;top:608.74px;font-size:12px;line-height:12px;color:#cccccc;font-family:'Liberation Sans',sans-serif;transform:scaleX(0.9487)">README.md</span>
<span id="t68" class="a t" style="left:76.30px;top:629.34px;font-size:12px;line-height:12px;color:#cccccc;font-family:'Liberation Sans',sans-serif;transform:scaleX(0.9930)">images</span>
<div class="a" style="left:44px;top:636.7px;width:192px;height:20.2px;background:#383838"></div>
<div class="a" style="left:44px;top:656.9px;width:192px;height:4.6px;background:#252526"></div>
<svg class="a" style="left:50px;top:642px" width="7" height="11" viewBox="0 0 7 11"><path d="M0.8 0.8 L5.5 5.5 L0.8 10.2" fill="none" stroke="#c5c5c5" stroke-width="1.2"/></svg>
<span id="t69" class="a t" style="left:62.90px;top:642.43px;font-size:10px;line-height:10px;color:#cccccc;font-family:'Liberation Sans',sans-serif;font-weight:bold;transform:scaleX(0.9910)">OUTLINE</span>
<span id="t70" class="a t" style="left:250.25px;top:39.31px;font-size:10.5px;line-height:10.5px;color:#cbcb41;font-family:'Liberation Sans',sans-serif;font-weight:bold;transform:scaleX(0.8433)">JS</span>
<span id="t71" class="a t" style="left:266.60px;top:38.24px;font-size:12px;line-height:12px;color:#969696;font-family:'Liberation Sans',sans-serif;transform:scaleX(0.9787)">state.js</span>
<span id="t72" class="a t" style="left:362.40px;top:39.31px;font-size:10.5px;line-height:10.5px;color:#cbcb41;font-family:'Liberation Sans',sans-serif;font-weight:bold;transform:scaleX(0.8433)">JS</span>
<span id="t73" class="a t" style="left:378.80px;top:38.24px;font-size:12px;line-height:12px;color:#ffffff;font-family:'Liberation Sans',sans-serif;transform:scaleX(0.9833)">index.js</span>
<span id="t74" class="a t" style="left:475.20px;top:39.31px;font-size:10.5px;line-height:10.5px;color:#cbcb41;font-family:'Liberation Sans',sans-serif;font-weight:bold;transform:scaleX(0.8433)">JS</span>
<span id="t75" class="a t" style="left:491.50px;top:38.24px;font-size:12px;line-height:12px;color:#969696;font-family:'Liberation Sans',sans-serif;transform:scaleX(0.9931)">render.js</span>
<span id="t76" class="a t" style="left:587.80px;top:39.31px;font-size:10.5px;line-height:10.5px;color:#cbcb41;font-family:'Liberation Sans',sans-serif;font-weight:bold;transform:scaleX(0.8433)">JS</span>
<span id="t77" class="a t" style="left:603.40px;top:38.24px;font-size:12px;line-height:12px;color:#969696;font-family:'Liberation Sans',sans-serif;transform:scaleX(1.0233)">App.js</span>
<span id="t78" class="a t" style="left:700.00px;top:39.31px;font-size:10.5px;line-height:10.5px;color:#cbcb41;font-family:'Liberation Sans',sans-serif;font-weight:bold;transform:scaleX(0.8433)">JS</span>
<span id="t79" class="a t" style="left:716.00px;top:38.24px;font-size:12px;line-height:12px;color:#969696;font-family:'Liberation Sans',sans-serif;transform:scaleX(1.0028)">Main.js</span>
<span id="t80" class="a t" style="left:812.70px;top:39.31px;font-size:10.5px;line-height:10.5px;color:#cbcb41;font-family:'Liberation Sans',sans-serif;font-weight:bold;transform:scaleX(0.8433)">JS</span>
<span id="t81" class="a t" style="left:828.20px;top:38.24px;font-size:12px;line-height:12px;color:#969696;font-family:'Liberation Sans',sans-serif;transform:scaleX(0.9568)">Tape.js</span>
<span id="t82" class="a t" style="left:924.90px;top:38.34px;font-size:12px;line-height:12px;color:#519aba;font-family:'Liberation Sans',sans-serif;font-weight:bold;transform:scaleX(1.5082)">#</span>
<span id="t83" class="a t" style="left:940.40px;top:38.24px;font-size:12px;line-height:12px;color:#969696;font-family:'Liberation Sans',sans-serif;font-style:italic;transform:scaleX(0.9308)">index.css</span>
<span id="t84" class="a t" style="left:1037.50px;top:39.31px;font-size:10.5px;line-height:10.5px;color:#cbcb41;font-family:'Liberation Sans',sans-serif;font-weight:bold;transform:scaleX(0.8433)">JS</span>
<span id="t85" class="a t" style="left:1053.00px;top:38.24px;font-size:12px;line-height:12px;color:#969696;font-family:'Liberation Sans',sans-serif;transform:scaleX(0.9779)">NewPost.js</span>
<span id="t86" class="a t" style="left:251.20px;top:64.84px;font-size:12px;line-height:12px;color:#a9a9a9;font-family:'Liberation Sans',sans-serif;transform:scaleX(1.0308)">goeveni</span>
<span id="t87" class="a t" style="left:308.80px;top:64.84px;font-size:12px;line-height:12px;color:#a9a9a9;font-family:'Liberation Sans',sans-serif;transform:scaleX(0.9817)">src</span>
<span id="t88" class="a t" style="left:343.60px;top:65.11px;font-size:10.5px;line-height:10.5px;color:#cbcb41;font-family:'Liberation Sans',sans-serif;font-weight:bold;transform:scaleX(0.8433)">JS</span>
<span id="t89" class="a t" style="left:360.00px;top:64.84px;font-size:12px;line-height:12px;color:#a9a9a9;font-family:'Liberation Sans',sans-serif;transform:scaleX(0.9733)">index.js</span>
<span id="t90" class="a t" style="left:268.40px;top:84.80px;font-size:12px;line-height:12px;color:#a8a8a8;font-family:'Liberation Mono',monospace">1</span>
<span id="t91" class="a t" style="left:268.40px;top:102.52px;font-size:12px;line-height:12px;color:#858585;font-family:'Liberation Mono',monospace">2</span>
<span id="t92" class="a t" style="left:268.40px;top:120.24px;font-size:12px;line-height:12px;color:#858585;font-family:'Liberation Mono',monospace">3</span>
<span id="t93" class="a t" style="left:268.40px;top:137.96px;font-size:12px;line-height:12px;color:#858585;font-family:'Liberation Mono',monospace">4</span>
<span id="t94" class="a t" style="left:268.40px;top:155.68px;font-size:12px;line-height:12px;color:#858585;font-family:'Liberation Mono',monospace">5</span>
<span id="t95" class="a t" style="left:268.40px;top:173.40px;font-size:12px;line-height:12px;color:#858585;font-family:'Liberation Mono',monospace">6</span>
<span id="t96" class="a t" style="left:268.40px;top:191.12px;font-size:12px;line-height:12px;color:#858585;font-family:'Liberation Mono',monospace">7</span>
<span id="t97" class="a t" style="left:268.40px;top:208.84px;font-size:12px;line-height:12px;color:#858585;font-family:'Liberation Mono',monospace">8</span>
<span id="t98" class="a t" style="left:268.40px;top:226.56px;font-size:12px;line-height:12px;color:#858585;font-family:'Liberation Mono',monospace">9</span>
<span id="t99" class="a t" style="left:300.00px;top:84.80px;font-size:12px;line-height:12px;color:#d4d4d4;font-family:'Liberation Mono',monospace;-webkit-text-stroke:0.25px currentColor"><span style="color:#c586c0">import</span> <span style="color:#569cd6">*</span> <span style="color:#c586c0">as</span> <span style="color:#9cdcfe">serviceWorker</span> <span style="color:#c586c0">from</span> <span style="color:#ce9178">'./serviceWorker'</span><span style="color:#d4d4d4">;</span></span>
<span id="t100" class="a t" style="left:300.00px;top:102.52px;font-size:12px;line-height:12px;color:#d4d4d4;font-family:'Liberation Mono',monospace;-webkit-text-stroke:0.25px currentColor"><span style="color:#c586c0">import</span> <span style="color:#d4d4d4">{</span> <span style="color:#9cdcfe">rerenderEntireTree</span> <span style="color:#d4d4d4">}</span> <span style="color:#c586c0">from</span> <span style="color:#ce9178">'./render'</span></span>
<span id="t101" class="a t" style="left:300.00px;top:120.24px;font-size:12px;line-height:12px;color:#d4d4d4;font-family:'Liberation Mono',monospace;-webkit-text-stroke:0.25px currentColor"><span style="color:#c586c0">import</span> <span style="color:#9cdcfe">state</span> <span style="color:#c586c0">from</span> <span style="color:#ce9178">'./Redux/state'</span></span>
<span id="t102" class="a t" style="left:300.00px;top:173.40px;font-size:12px;line-height:12px;color:#d4d4d4;font-family:'Liberation Mono',monospace;-webkit-text-stroke:0.25px currentColor"><span style="color:#dcdcaa">rerenderEntireTree</span><span style="color:#d4d4d4">(</span><span style="color:#9cdcfe">state</span><span style="color:#d4d4d4">)</span></span>
<span id="t103" class="a t" style="left:300.00px;top:208.84px;font-size:12px;line-height:12px;color:#d4d4d4;font-family:'Liberation Mono',monospace;-webkit-text-stroke:0.25px currentColor"><span style="color:#9cdcfe">serviceWorker</span><span style="color:#d4d4d4">.</span><span style="color:#dcdcaa">unregister</span><span style="color:#d4d4d4">();</span></span>
<span id="t104" class="a t" style="left:29.70px;top:666.74px;font-size:12px;line-height:12px;color:#ffffff;font-family:'Liberation Sans',sans-serif;transform:scaleX(0.9382)">redux</span>
<span id="t105" class="a t" style="left:116.60px;top:666.74px;font-size:12px;line-height:12px;color:#ffffff;font-family:'Liberation Sans',sans-serif;transform:scaleX(1.0725)">0</span>
<span id="t106" class="a t" style="left:141.80px;top:666.74px;font-size:12px;line-height:12px;color:#ffffff;font-family:'Liberation Sans',sans-serif;transform:scaleX(1.0390)">0</span>
<span id="t107" class="a t" style="left:168.40px;top:666.74px;font-size:12px;line-height:12px;color:#ffffff;font-family:'Liberation Sans',sans-serif;transform:scaleX(0.9022)">11</span>
<span id="t108" class="a t" style="left:195.00px;top:666.74px;font-size:12px;line-height:12px;color:#ffffff;font-family:'Liberation Sans',sans-serif;transform:scaleX(0.8713)">{..} : Scanning..</span>
<span id="t109" class="a t" style="left:298.50px;top:666.74px;font-size:12px;line-height:12px;color:#ffffff;font-family:'Liberation Sans',sans-serif;transform:scaleX(0.9306)">javascript</span>
<span id="t110" class="a t" style="left:349.00px;top:667.74px;font-size:12px;line-height:12px;color:#ffffff;font-family:'Liberation Sans',sans-serif">|</span>
<span id="t111" class="a t" style="left:371.50px;top:666.74px;font-size:12px;line-height:12px;color:#ffffff;font-family:'Liberation Sans',sans-serif;transform:scaleX(0.8982)">index.js</span>
<span id="t112" class="a t" style="left:897.00px;top:666.74px;font-size:12px;line-height:12px;color:#ffffff;font-family:'Liberation Sans',sans-serif;transform:scaleX(0.8969)">Ln 1, Col 50</span>
<span id="t113" class="a t" style="left:970.00px;top:666.74px;font-size:12px;line-height:12px;color:#ffffff;font-family:'Liberation Sans',sans-serif;transform:scaleX(0.8546)">Spaces: 4</span>
<span id="t114" class="a t" style="left:1030.60px;top:666.74px;font-size:12px;line-height:12px;color:#ffffff;font-family:'Liberation Sans',sans-serif;transform:scaleX(0.8744)">UTF-8</span>
<span id="t115" class="a t" style="left:1075.00px;top:666.74px;font-size:12px;line-height:12px;color:#ffffff;font-family:'Liberation Sans',sans-serif;transform:scaleX(0.7521)">LF</span>
<span id="t116" class="a t" style="left:1101.00px;top:666.74px;font-size:12px;line-height:12px;color:#ffffff;font-family:'Liberation Sans',sans-serif;transform:scaleX(0.8678)">JavaScript</span>
<span id="t117" class="a t" style="left:1181.60px;top:666.74px;font-size:12px;line-height:12px;color:#ffffff;font-family:'Liberation Sans',sans-serif;transform:scaleX(0.8372)">ESLint</span>
<span id="t118" class="a t" style="left:199.50px;top:695.53px;font-size:10px;line-height:10px;color:#31a8ff;font-family:'Liberation Sans',sans-serif;font-weight:bold;transform:scaleX(1.1174)">Ps</span>
<span id="t119" class="a t" style="left:576.00px;top:702.88px;font-size:9px;line-height:9px;color:#ffffff;font-family:'Liberation Sans',sans-serif">1</span>
<span id="t120" class="a t" style="left:1141.50px;top:694.27px;font-size:11.5px;line-height:11.5px;color:#ffffff;font-family:'Liberation Sans',sans-serif;transform:scaleX(0.9131)">РУС</span>
<span id="t121" class="a t" style="left:1187.20px;top:686.07px;font-size:11.5px;line-height:11.5px;color:#ffffff;font-family:'Liberation Sans',sans-serif;transform:scaleX(0.8650)">16:25</span>
<span id="t122" class="a t" style="left:1174.30px;top:702.97px;font-size:11.5px;line-height:11.5px;color:#ffffff;font-family:'Liberation Sans',sans-serif;transform:scaleX(0.8862)">21.12.2019</span>
<span id="t123" class="a t" style="left:1253.00px;top:703.03px;font-size:10px;line-height:10px;color:#ffffff;font-family:'Liberation Sans',sans-serif;font-weight:bold">9</span>
</body></html>
